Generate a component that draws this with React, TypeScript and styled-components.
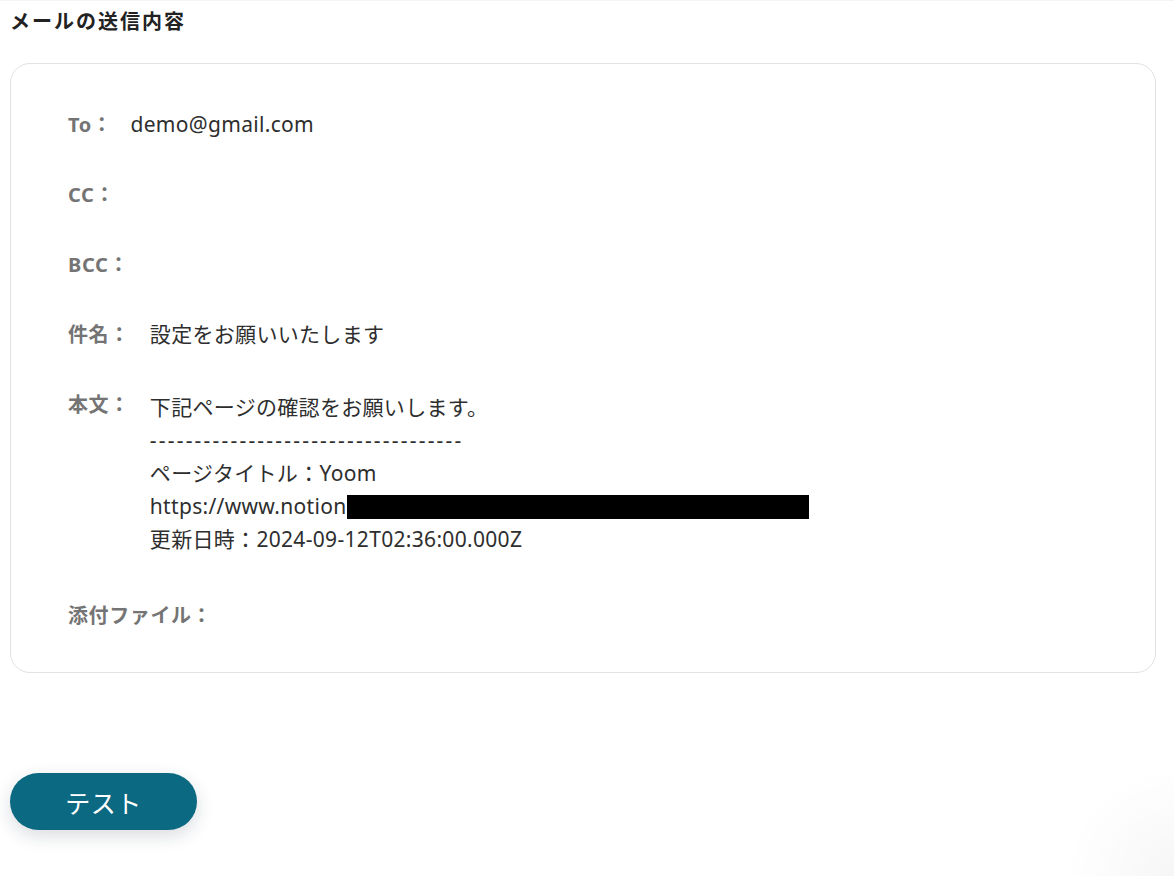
import React from "react";
import styled, { createGlobalStyle } from "styled-components";

const GlobalStyle = createGlobalStyle`
  html, body {
    margin: 0;
    padding: 0;
    background: #ffffff;
  }
  body {
    font-family: "Noto Sans", "Noto Sans CJK JP", sans-serif;
    color: #333333;
    min-height: 876px;
    background:
      radial-gradient(circle at 100% 100%, rgba(0, 0, 0, 0.035), rgba(0, 0, 0, 0) 110px),
      #ffffff;
  }
`;

const Page = styled.div`
  border-top: 1px solid #f3f3f8;
  padding: 6px 18px 40px 10px;
  display: flex;
  flex-direction: column;
  align-items: stretch;
`;

const Title = styled.h2`
  margin: 0 0 26px;
  font-size: 20px;
  line-height: 30px;
  font-weight: 700;
  letter-spacing: 0.1em;
  color: #222222;
`;

const Card = styled.section`
  border: 1px solid #e2e2e2;
  border-radius: 20px;
  padding: 44px 56px 40px 57px;
  display: flex;
  flex-direction: column;
  gap: 37px;
`;

const Row = styled.div<{ $top?: boolean }>`
  display: flex;
  align-items: ${(p) => (p.$top ? "flex-start" : "center")};
  min-height: 33px;
`;

const Label = styled.span<{ $gap: number }>`
  font-size: 20px;
  line-height: 33px;
  font-weight: 700;
  letter-spacing: 0.03em;
  color: #747474;
  margin-right: ${(p) => p.$gap}px;
  white-space: nowrap;
`;

const Value = styled.div<{ $pad?: number }>`
  font-size: 21px;
  line-height: 33px;
  letter-spacing: 0.015em;
  color: #2e2e2e;
  padding-top: ${(p) => p.$pad ?? 0}px;
  padding-bottom: ${(p) => (p.$pad ? p.$pad + 3 : 0)}px;
  display: flex;
  flex-direction: column;
`;

const Line = styled.div`
  white-space: nowrap;
  display: flex;
  align-items: center;
`;

const Dashes = styled.span`
  letter-spacing: 2.2px;
`;

const Redacted = styled.span`
  display: inline-block;
  width: 462px;
  height: 24px;
  background: #000000;
`;

const Footer = styled.div`
  margin-top: 100px;
  display: flex;
`;

const TestButton = styled.button`
  width: 187px;
  height: 57px;
  border: none;
  border-radius: 29px;
  background: #0b6981;
  color: #ffffff;
  font-family: "Noto Sans CJK JP", sans-serif;
  font-size: 25px;
  letter-spacing: 0.02em;
  box-shadow: 0 6px 18px rgba(20, 40, 60, 0.16);
  cursor: pointer;
`;

export default function App() {
  return (
    <>
      <GlobalStyle />
      <Page>
        <Title>メールの送信内容</Title>
        <Card>
          <Row>
            <Label $gap={18}>To：</Label>
            <Value>demo@gmail.com</Value>
          </Row>
          <Row>
            <Label $gap={18}>CC：</Label>
          </Row>
          <Row>
            <Label $gap={18}>BCC：</Label>
          </Row>
          <Row>
            <Label $gap={20}>件名：</Label>
            <Value>設定をお願いいたします</Value>
          </Row>
          <Row $top>
            <Label $gap={20}>本文：</Label>
            <Value $pad={3}>
              <Line>下記ページの確認をお願いします。</Line>
              <Line>
                <Dashes>-----------------------------------</Dashes>
              </Line>
              <Line>ページタイトル：Yoom</Line>
              <Line>
                https://www.notion
                <Redacted />
              </Line>
              <Line>更新日時：2024-09-12T02:36:00.000Z</Line>
            </Value>
          </Row>
          <Row>
            <Label $gap={18}>添付ファイル：</Label>
          </Row>
        </Card>
        <Footer>
          <TestButton>テスト</TestButton>
        </Footer>
      </Page>
    </>
  );
}
